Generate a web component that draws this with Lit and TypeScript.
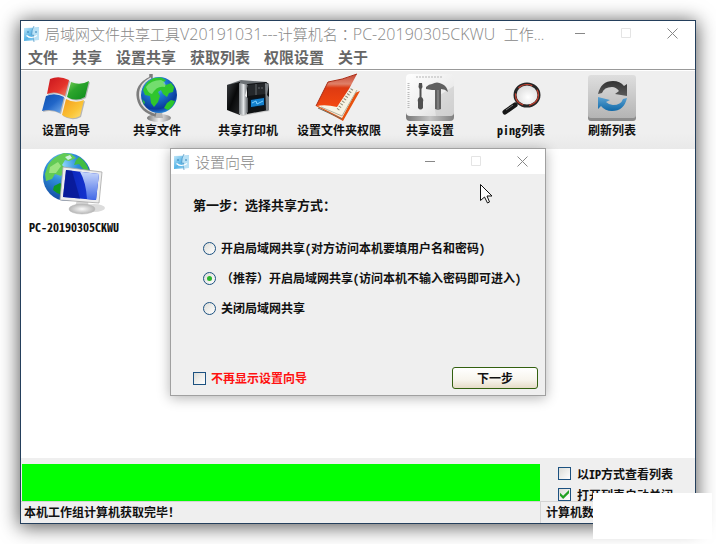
import { LitElement, html, css } from "lit";
import { customElement, state } from "lit/decorators.js";

const appIcon = html`<svg viewBox="0 0 16 16" width="16" height="16" aria-hidden="true">
  <defs>
    <linearGradient id="face" x1="0" y1="0" x2="1" y2="1">
      <stop offset="0" stop-color="#c4e9fa" /><stop offset=".5" stop-color="#58b4e6" /><stop offset="1" stop-color="#a9dcf4" />
    </linearGradient>
  </defs>
  <path d="M0 2L15 1.5V14L0 15Z" fill="url(#face)" />
  <path d="M9 1.8L15 1.5V14L9 14.3L10 9H8Z" fill="#b9e1f5" />
  <path d="M10 0Q7 5 7.5 9H9.6Q9 12 10 16" fill="none" stroke="#5f9fca" stroke-width=".8" />
  <path d="M4 5V7M12 5V7" stroke="#2f7fb6" stroke-width="1" />
  <path d="M2.500 9.500Q7 13.500 13 9.500" fill="none" stroke="#fff" stroke-width="1.200" />
</svg>`;

const windowsIcon = html`<svg viewBox="0 0 48 48" width="48" height="48" aria-hidden="true">
  <defs>
    <linearGradient id="wr" x1="0" y1="0" x2="1" y2="1"><stop offset="0" stop-color="#c8141c" /><stop offset=".6" stop-color="#e5342c" /><stop offset="1" stop-color="#f08a6a" /></linearGradient>
    <linearGradient id="wg" x1="0" y1="0" x2="1" y2="1"><stop offset="0" stop-color="#7fd45c" /><stop offset=".4" stop-color="#2ca52c" /><stop offset="1" stop-color="#0b8a1c" /></linearGradient>
    <linearGradient id="wb" x1="0" y1="0" x2="1" y2="1"><stop offset="0" stop-color="#0d4fae" /><stop offset=".5" stop-color="#2166c8" /><stop offset="1" stop-color="#79b0ee" /></linearGradient>
    <linearGradient id="wy" x1="0" y1="0" x2="1" y2="1"><stop offset="0" stop-color="#f39a1c" /><stop offset=".6" stop-color="#fbc436" /><stop offset="1" stop-color="#fde27a" /></linearGradient>
  </defs>
  <g transform="translate(1 1)" fill="#b5b5b5">
    <path d="M8 4Q17 0 27 5L23 21Q13 15 5 19Z" /><path d="M29 7Q38 11 47 6L43 22Q34 27 25 22Z" />
    <path d="M4 21Q13 17 22 22L18 38Q9 33 0 36Z" /><path d="M24 24Q33 29 42 25L38 41Q29 46 20 40Z" />
  </g>
  <path d="M8 4Q17 0 27 5L23 21Q13 15 5 19Z" fill="url(#wr)" />
  <path d="M29 7Q38 11 47 6L43 22Q34 27 25 22Z" fill="url(#wg)" />
  <path d="M4 21Q13 17 22 22L18 38Q9 33 0 36Z" fill="url(#wb)" />
  <path d="M24 24Q33 29 42 25L38 41Q29 46 20 40Z" fill="url(#wy)" />
</svg>`;

const globeIcon = html`<svg viewBox="0 0 48 48" width="48" height="48" aria-hidden="true">
  <defs>
    <radialGradient id="sea" cx=".4" cy=".25" r=".8"><stop offset="0" stop-color="#7fd0ff" /><stop offset=".35" stop-color="#1f7ed6" /><stop offset=".8" stop-color="#0a3a9c" /><stop offset="1" stop-color="#2f9ae6" /></radialGradient>
    <linearGradient id="metal" x1="0" y1="0" x2="1" y2="0"><stop offset="0" stop-color="#777" /><stop offset=".5" stop-color="#f2f2f2" /><stop offset="1" stop-color="#8a8a8a" /></linearGradient>
  </defs>
  <ellipse cx="26" cy="43" rx="12" ry="4" fill="url(#metal)" />
  <path d="M22 37H29L30 43H21Z" fill="#b4b4b4" />
  <path d="M18 -1V3Q3 10 5.500 23Q8 36 23 40" fill="none" stroke="#7d7d7d" stroke-width="3.500" />
  <path d="M18 3Q5 10 7 23Q9 34 22 38" fill="none" stroke="#dedede" stroke-width="1.500" />
  <circle cx="26" cy="20" r="18" fill="url(#sea)" />
  <path d="M10 15Q13 6 21 3L28 2.500L33 5L30 8L33 10L38 8L41 12L40 17L36 18L34 22L30 19L28 15L25 17L27 21L25 27L21 32L18 28L17 21L12 20Z" fill="#2fc62d" />
  <path d="M34 28L38 25L42 26Q40 32 35 35L31 33Z" fill="#2bc52b" />
  <path d="M9 24L12 27L11 30Z" fill="#28b838" />
  <path d="M13 12Q18 5 28 5Q34 7 32 12Q24 10 19 19Q15 18 13 12Z" fill="#d9ffd0" opacity=".4" />
</svg>`;

const serverIcon = html`<svg viewBox="0 0 48 48" width="48" height="48" aria-hidden="true">
  <defs>
    <linearGradient id="pillar" x1="0" y1="0" x2="1" y2="0"><stop offset="0" stop-color="#777c80" /><stop offset=".5" stop-color="#e4e7e9" /><stop offset="1" stop-color="#54585c" /></linearGradient>
    <linearGradient id="side" x1="0" y1="0" x2="1" y2="1"><stop offset="0" stop-color="#3a3d40" /><stop offset=".5" stop-color="#08090a" /><stop offset="1" stop-color="#26282a" /></linearGradient>
  </defs>
  <path d="M5 36L18 41L46 36L40 32Z" fill="#c9c9c9" />
  <path d="M3 10L17 5L43 7L42 10L17 12Z" fill="#6d7276" />
  <path d="M3 10L16 7V40L3 35Z" fill="url(#side)" />
  <path d="M23 9L42 7L45 9V35L23 39Z" fill="#111315" />
  <path d="M24 10L42 8V19L24 21Z" fill="#25282b" />
  <path d="M32 9V20M35 12V14M38 12V14" stroke="#65696d" />
  <path d="M15 8L24 10L21 21L24 23V37L21 40L15 39Z" fill="url(#pillar)" />
  <path d="M41 8L45 9L43 20L45 22V35L42 36Z" fill="#7d8286" />
  <path d="M26 24L41 22V31L26 33Z" fill="#06182a" />
  <path d="M27 25L40 23V30L27 32Z" fill="#1581cd" />
  <path d="M28 28L32 26L33 29L39 26" fill="none" stroke="#7fd0ff" />
</svg>`;

const bookIcon = html`<svg viewBox="0 0 48 48" width="48" height="48" aria-hidden="true">
  <defs>
    <linearGradient id="cover" x1="0" y1="0" x2="0" y2="1"><stop offset="0" stop-color="#c44634" /><stop offset=".3" stop-color="#df8068" /><stop offset=".42" stop-color="#dd3a12" /><stop offset="1" stop-color="#f4480f" /></linearGradient>
  </defs>
  <path d="M1 31L16 27L45 16L28 46Z" fill="#e8520f" />
  <path d="M3 31L20 20L43 13L27 43Z" fill="#f6f3e4" />
  <path d="M6 32L27 41L42 15" fill="none" stroke="#b5af9a" />
  <path d="M3 33L27 44" fill="none" stroke="#77705e" />
  <path d="M37 14L22 36" stroke="#8c8672" stroke-width="3" stroke-dasharray="1 2" />
  <path d="M1 31L13 7Q27 5 42 -1L34 14L22 32Q11 29 1 31Z" fill="url(#cover)" />
  <path d="M1 31L13 7Q27 5 42 -1" fill="none" stroke="#a92c14" />
</svg>`;

const toolsIcon = html`<svg viewBox="0 0 48 48" width="48" height="48" aria-hidden="true">
  <defs>
    <linearGradient id="plate" x1="0" y1="0" x2="1" y2="1"><stop offset="0" stop-color="#fff" /><stop offset=".6" stop-color="#ededed" /><stop offset="1" stop-color="#d6d6d6" /></linearGradient>
    <linearGradient id="edge" x1="0" y1="0" x2="1" y2="0"><stop offset="0" stop-color="#777" /><stop offset=".5" stop-color="#c4c4c4" /><stop offset="1" stop-color="#808080" /></linearGradient>
  </defs>
  <rect y="4" width="48" height="42" rx="4" fill="url(#edge)" />
  <rect y="-1" width="48" height="42" rx="4" fill="url(#plate)" />
  <path d="M10 2H37" stroke="#b5b5b5" stroke-dasharray="2 1" />
  <path d="M2.500 8V15M2.500 17V24M2.500 26V33" stroke="#bbb" stroke-width="2" stroke-dasharray="1 1" />
  <path d="M34 20L48 11V37Q48 41 44 41H30L29 35Z" fill="#c9c9c9" opacity=".55" />
  <path d="M13 8H16L16.500 12L15.500 14V22Q18 24 17 27V33Q14.500 36 12 33V27Q11 24 13.500 22V14L12.500 12Z" fill="#505050" />
  <path d="M20 12Q23 9 26 9Q31 6 36 9Q41 11 42 17Q39 14 35 14V34Q32 35.500 29 34V15H26L20 14Z" fill="#606060" />
  <path d="M31 15H33V34H31Z" fill="#7c7c7c" />
</svg>`;

const lensIcon = html`<svg viewBox="0 0 48 48" width="48" height="48" aria-hidden="true">
  <defs><radialGradient id="glass" cx=".55" cy=".6" r=".7"><stop offset="0" stop-color="#fff" /><stop offset="1" stop-color="#d3d3d3" /></radialGradient></defs>
  <path d="M22 27L18 31" stroke="#9b9b9b" stroke-width="3" />
  <path d="M18 30L8 37" stroke="#161616" stroke-width="5" stroke-linecap="round" />
  <path d="M16 30L9 35" stroke="#777" stroke-width="1" />
  <ellipse cx="30" cy="20" rx="12" ry="11" fill="url(#glass)" stroke="#262626" stroke-width="3" />
  <ellipse cx="30" cy="20" rx="11.500" ry="10.500" fill="none" stroke="#c6402f" stroke-width="1.200" stroke-dasharray="15 6" />
</svg>`;

const refreshIcon = html`<svg viewBox="0 0 48 48" width="48" height="48" aria-hidden="true">
  <defs>
    <linearGradient id="tile" x1="0" y1="0" x2="0" y2="1"><stop offset="0" stop-color="#dedede" /><stop offset="1" stop-color="#b4b4b4" /></linearGradient>
    <linearGradient id="blue" x1="0" y1="0" x2="0" y2="1"><stop offset="0" stop-color="#5ca2d2" /><stop offset="1" stop-color="#0f68a8" /></linearGradient>
    <linearGradient id="dark" x1="0" y1="0" x2="0" y2="1"><stop offset="0" stop-color="#333" /><stop offset="1" stop-color="#5b5b5b" /></linearGradient>
  </defs>
  <rect y="4" width="48" height="42" rx="3" fill="#8c8c8c" />
  <rect width="48" height="43" rx="3" fill="url(#tile)" />
  <path d="M10 19Q13 6 25 6Q32 6 36 11L39 9V21L27 19L31 16Q28 12 24 12Q16 12 14 18Z" fill="url(#dark)" />
  <path d="M39 23Q36 36 24 36Q17 36 13 31L10 34V22L22 25L18 27Q21 30 25 30Q33 30 35 24Z" fill="url(#blue)" />
</svg>`;

const networkPcIcon = html`<svg viewBox="0 0 64 64" width="64" height="64" aria-hidden="true">
  <defs>
    <radialGradient id="earth" cx=".4" cy=".25" r=".8"><stop offset="0" stop-color="#8fd8fb" /><stop offset=".4" stop-color="#2f8fdb" /><stop offset="1" stop-color="#10409a" /></radialGradient>
    <linearGradient id="screen" x1="0" y1="0" x2="1" y2="0"><stop offset="0" stop-color="#0a25b8" /><stop offset="1" stop-color="#1838d8" /></linearGradient>
    <linearGradient id="shine" x1="0" y1="0" x2="0" y2="1"><stop offset="0" stop-color="#c9d8fb" /><stop offset="1" stop-color="#4268e6" /></linearGradient>
    <radialGradient id="foot"><stop offset="0" stop-color="#fafafa" /><stop offset="1" stop-color="#b5b5b5" /></radialGradient>
  </defs>
  <ellipse cx="52" cy="56" rx="11" ry="4" fill="#dcdcdc" />
  <circle cx="25" cy="25" r="24" fill="url(#earth)" />
  <path d="M6 13Q12 4 22 1L29 2L34 6L27 9L23 8L20 13L24 17L19 24L13 22L10 27L4 29L3 22Z" fill="#62cb55" />
  <path d="M8 15L16 10L19 14L14 21L7 21Z" fill="#c2f59d" opacity=".6" />
  <path d="M37 5Q45 10 47 19L41 17L37 12L32 13L34 8Z" fill="#42bd42" />
  <path d="M12 34L18 31L23 35L20 43L15 41L11 38Z" fill="#109a22" />
  <path d="M23 5L28 3L30 6L26 8Z" fill="#e9faff" opacity=".8" />
  <path d="M35 48L46 49L47 58H32Z" fill="#d4d4d4" />
  <ellipse cx="40" cy="57" rx="13" ry="5" fill="url(#foot)" stroke="#b8b8b8" stroke-width=".5" />
  <path d="M21 15L60 20L57 51L18 48Z" fill="#ededed" stroke="#a7a7a7" stroke-width=".8" />
  <path d="M24 18L57 22L54 48L21 45Z" fill="url(#screen)" />
  <path d="M38 19.700L57 22L54 48L45 47Q44 30 38 19.700Z" fill="url(#shine)" />
  <path d="M24 18L30 18.800L38 46.500L21 45Z" fill="#07158c" opacity=".7" />
</svg>`;

@customElement("window-title")
export class WindowTitle extends LitElement {
  static styles = css`
    :host {
      display: flex;
      align-items: center;
      height: 25px;
      padding-left: 3px;
      gap: 5px;
      background: #fff;
      color: #888;
      font: 300 15px/24px "Open Sans", "Noto Sans CJK SC", sans-serif;
    }
    svg { flex: none; display: block; }
    .caption {
      flex: 1;
      min-width: 0;
      margin: 0;
      font: inherit;
      white-space: pre;
      overflow: hidden;
      text-overflow: ellipsis;
    }
    .buttons { display: flex; flex: none; }
    button {
      width: 46px;
      height: 25px;
      padding: 0;
      border: 0;
      background: none;
      display: grid;
      place-items: center;
      color: #888;
    }
    button:disabled { color: #e4e4e4; }
    button path { fill: none; stroke: currentColor; }
  `;

  render() {
    return html`${appIcon}
      <h1 class="caption"><slot></slot></h1>
      <div class="buttons">
        <button aria-label="最小化"><svg width="11" height="11"><path d="M0 5.500H10" /></svg></button>
        <button aria-label="最大化" disabled><svg width="11" height="11"><path d="M.5 .5H9.500V9.500H.5Z" /></svg></button>
        <button aria-label="关闭"><svg width="11" height="11"><path d="M.5 .5L10.500 10.500M10.500 .5L.5 10.500" /></svg></button>
      </div>`;
  }
}

const controls = css`
  label { display: flex; align-items: center; white-space: nowrap; }
  input {
    appearance: none;
    flex: none;
    box-sizing: border-box;
    width: 13px;
    height: 13px;
    margin: 0;
    border: 1px solid #1c5180;
    background: linear-gradient(135deg, #dcdcd7, #fff);
    display: grid;
    place-items: center;
  }
  input[type="radio"] { border-radius: 50%; }
  input[type="radio"]:checked::before {
    content: "";
    width: 5px;
    height: 5px;
    border-radius: 50%;
    background: #2cb52c;
  }
  input[type="checkbox"]:checked::before {
    content: "";
    width: 9px;
    height: 9px;
    background: #21a121;
    clip-path: polygon(0 30%, 35% 65%, 100% 0, 100% 35%, 35% 100%, 0 65%);
  }
`;

@customElement("setup-wizard")
export class SetupWizard extends LitElement {
  @state() private choice = 1;

  private choices = [
    { note: "", text: "开启局域网共享(对方访问本机要填用户名和密码)" },
    { note: "（推荐）", text: "开启局域网共享(访问本机不输入密码即可进入)" },
    { note: "", text: "关闭局域网共享" },
  ];

  static styles = [
    controls,
    css`
      :host {
        display: block;
        box-sizing: border-box;
        width: 376px;
        border: 1px solid #a0a0a0;
        background: #efefef;
        box-shadow: 0 2px 12px rgba(0, 0, 0, 0.3);
      }
      .body { padding: 20px 7px 6px 22px; }
      h2 { margin: 0; font-size: 13px; line-height: 22px; }
      fieldset {
        display: grid;
        gap: 10px;
        margin: 0;
        padding: 22px 0 0 10px;
        border: 0;
      }
      fieldset label { gap: 5px; line-height: 20px; }
      .note { font-feature-settings: normal; }
      .actions {
        display: flex;
        align-items: center;
        justify-content: space-between;
        margin-top: 49px;
      }
      .actions label { gap: 5px; color: #f11; }
      button {
        width: 86px;
        height: 22px;
        padding: 0;
        border: 1px solid #33600f;
        border-radius: 3px;
        background: linear-gradient(#fff, #f7f4ec 60%, #e6dcc8);
        color: #111;
        font: inherit;
      }
    `,
  ];

  render() {
    return html`<window-title>设置向导</window-title>
      <form class="body" @submit=${(e: Event) => e.preventDefault()}>
        <h2 id="step">第一步：选择共享方式：</h2>
        <fieldset aria-labelledby="step">
          ${this.choices.map(
            (c, i) => html`<label>
              <input type="radio" name="mode" .checked=${this.choice === i} @change=${() => (this.choice = i)} />
              <span><span class="note">${c.note}</span>${c.text}</span>
            </label>`,
          )}
        </fieldset>
        <div class="actions">
          <label><input type="checkbox" />不再显示设置向导</label>
          <button>下一步</button>
        </div>
      </form>`;
  }
}

@customElement("app-root")
export class AppRoot extends LitElement {
  private menus = ["文件", "共享", "设置共享", "获取列表", "权限设置", "关于"];

  private tools = [
    { icon: windowsIcon, label: "设置向导" },
    { icon: globeIcon, label: "共享文件" },
    { icon: serverIcon, label: "共享打印机" },
    { icon: bookIcon, label: "设置文件夹权限" },
    { icon: toolsIcon, label: "共享设置" },
    { icon: lensIcon, label: "ping列表" },
    { icon: refreshIcon, label: "刷新列表" },
  ];

  static styles = [
    controls,
    css`
      :host {
        position: relative;
        display: flex;
        box-sizing: border-box;
        min-height: 100vh;
        padding: 20px;
        overflow: hidden;
        background: #fff;
        color: #111;
        font: 700 12px/16px "Noto Sans CJK SC", sans-serif;
        font-feature-settings: "hwid";
      }
      .window {
        flex: 1;
        min-width: 0;
        display: flex;
        flex-direction: column;
        border: 1px solid #243f5c;
        background: #fff;
        box-shadow: 0 2px 18px 1px rgba(0, 0, 0, 0.65);
      }
      window-title { font-feature-settings: normal; }
      .latin { font-size: 16px; }
      .colon { font-family: "Noto Sans CJK TC", sans-serif; }
      .menu {
        display: flex;
        height: 23px;
        border-bottom: 1px solid #999;
      }
      .menu button {
        height: 22px;
        padding: 0 7px;
        border: 0;
        background: none;
        color: #666;
        font: inherit;
        font-size: 15px;
        line-height: 22px;
      }
      .toolbar {
        display: flex;
        margin-top: 1px;
        background: linear-gradient(#efefef 80%, #e9e9e9);
      }
      .toolbar button {
        width: 91px;
        padding: 4px 1px 12px 0;
        border: 0;
        background: none;
        color: inherit;
        font: inherit;
        line-height: 14px;
        white-space: nowrap;
      }
      svg { display: block; margin: 0 auto; overflow: visible; }
      .list { flex: 1; margin: 0; padding: 3px 8px; list-style: none; }
      .list li { width: 90px; text-align: center; }
      .list span { display: block; padding-top: 3px; }
      .panel {
        display: flex;
        height: 43px;
        background: #efefef;
      }
      progress {
        appearance: none;
        display: block;
        flex: 1;
        height: 37px;
        margin: 6px 0 0 1px;
        border: 0;
        background: #0f0;
      }
      progress::-webkit-progress-bar { background: #efefef; }
      progress::-webkit-progress-value { background: #0f0; }
      .options {
        box-sizing: border-box;
        width: 155px;
        padding: 5px 0 0 18px;
      }
      .options label { height: 21px; gap: 6px; }
      .status {
        display: flex;
        height: 21px;
        line-height: 20px;
        border-top: 1px solid #d4d4d4;
        background: #efefef;
      }
      .status .message { flex: 1; padding-left: 3px; }
      .status .count {
        box-sizing: border-box;
        width: 155px;
        padding-left: 5px;
        border-left: 1px solid #d4d4d4;
      }
      .blank {
        position: absolute;
        right: 4px;
        bottom: 5px;
        width: 119px;
        height: 46px;
        background: #fff;
      }
      .overlay {
        position: absolute;
        inset: 0;
        display: grid;
        place-items: center;
      }
      .pointer { position: absolute; left: 480px; top: 184px; }
    `,
  ];

  render() {
    return html`<main class="window">
        <window-title>局域网文件共享工具<span class="latin">V20191031---</span>计算机名<span class="colon">：</span><span class="latin">PC-20190305CKWU  </span>工作...</window-title>
        <nav class="menu">${this.menus.map((m) => html`<button>${m}</button>`)}</nav>
        <div class="toolbar" role="toolbar">
          ${this.tools.map((t) => html`<button>${t.icon}${t.label}</button>`)}
        </div>
        <ul class="list">
          <li>${networkPcIcon}<span>PC-20190305CKWU</span></li>
        </ul>
        <div class="panel">
          <progress value="1" max="1" aria-label="获取进度"></progress>
          <div class="options">
            <label><input type="checkbox" />以IP方式查看列表</label>
            <label><input type="checkbox" checked />打开列表自动关闭</label>
          </div>
        </div>
        <footer class="status">
          <span class="message">本机工作组计算机获取完毕！</span>
          <span class="count">计算机数</span>
        </footer>
      </main>
      <div class="blank"></div>
      <div class="overlay"><setup-wizard></setup-wizard></div>
      <svg class="pointer" width="13" height="20" aria-hidden="true">
        <path d="M.5 .5V16.500L4.500 13L7.500 19L9.500 18L7 12H12Z" fill="#fff" stroke="#111" />
      </svg>`;
  }
}
